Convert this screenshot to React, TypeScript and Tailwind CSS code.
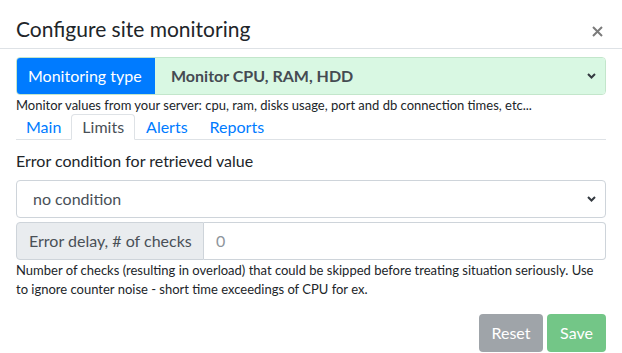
import React from "react";

const font = { fontFamily: 'Lato, "Noto Sans", sans-serif' };

function Chevron() {
  return (
    <svg width="9" height="6" viewBox="0 0 9 6" className="shrink-0">
      <path d="M1 1l3.5 3.5L8 1" fill="none" stroke="#343a40" strokeWidth="2" />
    </svg>
  );
}

export default function App() {
  return (
    <div className="w-[622px] h-[353px] overflow-hidden bg-white text-[#212529]" style={font}>
      <div className="h-[49px] border-b border-[#dee2e6] px-4 flex items-start justify-between">
        <h5 className="pt-[14px] text-[21px] leading-[30px]">Configure site monitoring</h5>
        <svg width="11" height="11" viewBox="0 0 11 11" className="mt-[26px] mr-[3px]">
          <path d="M1 1l9 9M10 1l-9 9" stroke="#7b7b7b" strokeWidth="2" />
        </svg>
      </div>

      <div className="px-4 pt-2">
        <div className="flex h-[38px] rounded border border-[#c3e6cb] overflow-hidden">
          <div className="w-[139px] bg-[#007bff] text-white text-[16px] flex items-center pl-3 -my-px -ml-px">
            Monitoring type
          </div>
          <div className="flex-1 bg-[#d9f8e3] flex items-center justify-between pl-4 pr-[9px]">
            <span className="font-bold text-[16px] text-[#454b52]">Monitor CPU, RAM, HDD</span>
            <Chevron />
          </div>
        </div>
        <p className="text-[13px] leading-[18px] mt-px">
          Monitor values from your server: cpu, ram, disks usage, port and db connection times, etc...
        </p>

        <div className="flex h-[26px] border-b border-[#dee2e6] text-[16px] leading-[24px]">
          <span className="px-[9px] text-[#007bff] border border-transparent">Main</span>
          <span className="px-[10px] text-[#495057] bg-white border border-[#dee2e6] border-b-white rounded-t -mb-px">Limits</span>
          <span className="px-[10px] text-[#007bff] border border-transparent">Alerts</span>
          <span className="px-[10px] text-[#007bff] border border-transparent">Reports</span>
        </div>

        <div className="pt-[9px]">
          <label className="block text-[16px] leading-[24px] mb-[7px]">Error condition for retrieved value</label>
          <div className="h-[38px] rounded border border-[#ced4da] flex items-center justify-between pl-4 pr-[9px] text-[16px] text-[#495057]">
            <span>no condition</span>
            <Chevron />
          </div>

          <div className="mt-[4px] flex h-[38px] text-[16px]">
            <div className="w-[188px] whitespace-nowrap bg-[#e9ecef] border border-[#ced4da] rounded-l flex items-center pl-3 text-[#495057]">
              Error delay, # of checks
            </div>
            <div className="flex-1 border border-l-0 border-[#ced4da] rounded-r flex items-center pl-3 text-[#8e959b]">
              0
            </div>
          </div>
          <p className="text-[13px] leading-[18.5px] mt-px">
            Number of checks (resulting in overload) that could be skipped before treating situation seriously. Use
            to ignore counter noise - short time exceedings of CPU for ex.
          </p>
        </div>

        <div className="flex justify-end gap-1 mt-[16px]">
          <button className="h-[38px] w-[64px] rounded bg-[#9fa4a9] text-white text-[16px]">Reset</button>
          <button className="h-[38px] w-[59px] rounded bg-[#73c687] text-white text-[16px]">Save</button>
        </div>
      </div>
    </div>
  );
}
